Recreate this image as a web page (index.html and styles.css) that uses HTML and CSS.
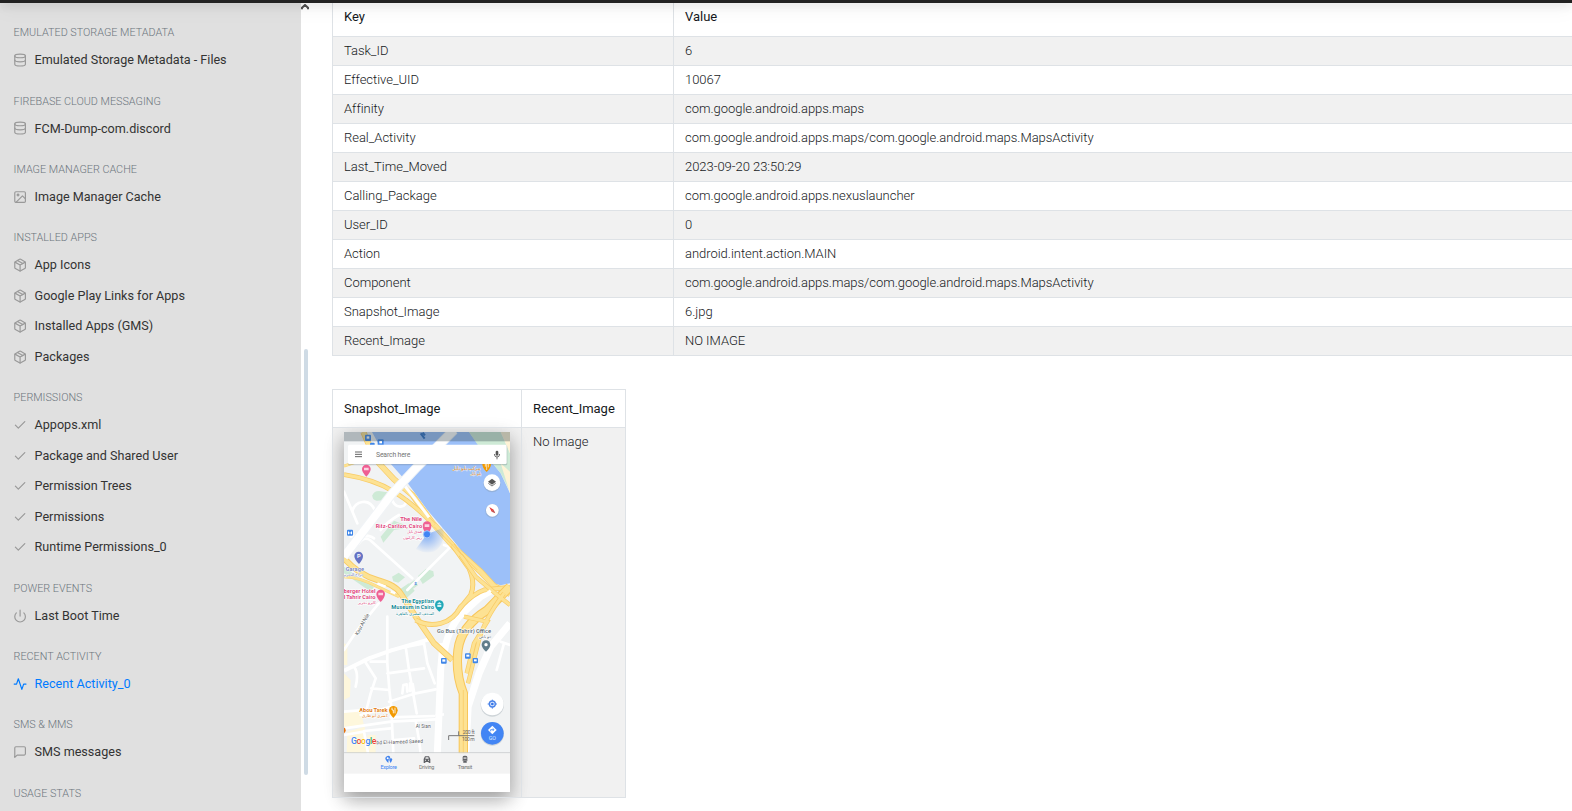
FILE: index.html
```html
<!DOCTYPE html>
<html lang="en">
<head>
<meta charset="utf-8">
<title>Recent Activity_0</title>
<link rel="stylesheet" href="styles.css">
</head>
<body>
<svg class="defs" width="0" height="0">
  <symbol id="database" viewBox="0 0 24 24"><ellipse cx="12" cy="5" rx="9" ry="3"/><path d="M21 12c0 1.66-4 3-9 3s-9-1.34-9-3"/><path d="M3 5v14c0 1.66 4 3 9 3s9-1.34 9-3V5"/></symbol>
  <symbol id="image" viewBox="0 0 24 24"><rect x="3" y="3" width="18" height="18" rx="2"/><circle cx="8.5" cy="8.5" r="1.5"/><path d="M21 15l-5-5L5 21"/></symbol>
  <symbol id="package" viewBox="0 0 24 24"><path d="M16.5 9.4l-9-5.19"/><path d="M21 16V8a2 2 0 0 0-1-1.73l-7-4a2 2 0 0 0-2 0l-7 4A2 2 0 0 0 3 8v8a2 2 0 0 0 1 1.73l7 4a2 2 0 0 0 2 0l7-4A2 2 0 0 0 21 16z"/><path d="M3.27 6.96L12 12.01l8.73-5.05M12 22.08V12"/></symbol>
  <symbol id="check" viewBox="0 0 24 24"><path d="M20 6L9 17l-5-5"/></symbol>
  <symbol id="power" viewBox="0 0 24 24"><path d="M18.36 6.64a9 9 0 1 1-12.73 0M12 2v10"/></symbol>
  <symbol id="activity" viewBox="0 0 24 24"><path d="M22 12h-4l-3 9L9 3l-3 9H2"/></symbol>
  <symbol id="message" viewBox="0 0 24 24"><path d="M21 15a2 2 0 0 1-2 2H7l-4 4V5a2 2 0 0 1 2-2h14a2 2 0 0 1 2 2z"/></symbol>
</svg>
<header class="topbar"></header>
<div class="page">
  <nav class="sidebar">
    <h6>Emulated Storage Metadata</h6>
    <a><svg><use href="#database"/></svg>Emulated Storage Metadata - Files</a>
    <h6>Firebase Cloud Messaging</h6>
    <a><svg><use href="#database"/></svg>FCM-Dump-com.discord</a>
    <h6>Image Manager Cache</h6>
    <a><svg><use href="#image"/></svg>Image Manager Cache</a>
    <h6>Installed Apps</h6>
    <a><svg><use href="#package"/></svg>App Icons</a>
    <a><svg><use href="#package"/></svg>Google Play Links for Apps</a>
    <a><svg><use href="#package"/></svg>Installed Apps (GMS)</a>
    <a><svg><use href="#package"/></svg>Packages</a>
    <h6>Permissions</h6>
    <a><svg><use href="#check"/></svg>Appops.xml</a>
    <a><svg><use href="#check"/></svg>Package and Shared User</a>
    <a><svg><use href="#check"/></svg>Permission Trees</a>
    <a><svg><use href="#check"/></svg>Permissions</a>
    <a><svg><use href="#check"/></svg>Runtime Permissions_0</a>
    <h6>Power Events</h6>
    <a><svg><use href="#power"/></svg>Last Boot Time</a>
    <h6>Recent Activity</h6>
    <a class="active"><svg><use href="#activity"/></svg>Recent Activity_0</a>
    <h6>SMS &amp; MMS</h6>
    <a><svg><use href="#message"/></svg>SMS messages</a>
    <h6>Usage Stats</h6>
  </nav>
  <div class="scroll">
    <svg class="up" viewBox="0 0 8 6"><path d="M1 5.2V3.8L4 1l3 2.800V5.200"/></svg>
    <div class="thumb"></div>
  </div>
  <main class="content">
    <table class="details">
      <thead><tr><th class="key">Key</th><th>Value</th></tr></thead>
      <tbody>
        <tr><td>Task_ID</td><td>6</td></tr>
        <tr><td>Effective_UID</td><td>10067</td></tr>
        <tr><td>Affinity</td><td>com.google.android.apps.maps</td></tr>
        <tr><td>Real_Activity</td><td>com.google.android.apps.maps/com.google.android.maps.MapsActivity</td></tr>
        <tr><td>Last_Time_Moved</td><td>2023-09-20 23:50:29</td></tr>
        <tr><td>Calling_Package</td><td>com.google.android.apps.nexuslauncher</td></tr>
        <tr><td>User_ID</td><td>0</td></tr>
        <tr><td>Action</td><td>android.intent.action.MAIN</td></tr>
        <tr><td>Component</td><td>com.google.android.apps.maps/com.google.android.maps.MapsActivity</td></tr>
        <tr><td>Snapshot_Image</td><td>6.jpg</td></tr>
        <tr><td>Recent_Image</td><td>NO IMAGE</td></tr>
      </tbody>
    </table>
    <table class="images">
      <thead><tr><th class="snap">Snapshot_Image</th><th>Recent_Image</th></tr></thead>
      <tbody><tr><td>
        <svg class="phone" viewBox="0 6 498 1080" font-family="Roboto, sans-serif">
          <defs><radialGradient id="beam" gradientUnits="userSpaceOnUse" cx="249" cy="313" r="58"><stop offset="0" stop-color="#4285f4" stop-opacity=".65"/><stop offset="1" stop-color="#4285f4" stop-opacity="0"/></radialGradient></defs>
          <rect y="6" width="498" height="1080" fill="#f1f3f4"/>
          <!-- river and parks -->
          <path d="M84 6L130 90 188 155 250 240 325 328 375 390 405 425 425 452 470 466 498 460V190L470 130 430 80 375 6z" fill="#9cc0f9"/>
          <path d="M375 6H470L498 70V185L470 130 405 50z" fill="#ceead6"/>
          <path d="M470 6H498V70zM470 100L498 125V190z" fill="#fef3d6"/>
          <g fill="#ceead6">
            <path d="M85 196Q90 183 105 183L130 187 124 210 98 212Q84 210 85 196z"/>
            <path d="M110 320L150 272 182 284 176 296 150 300 118 338z"/>
            <path d="M144 440L164 428 183 442 163 458 148 454zM168 478L194 460 212 482 188 504zM190 464L212 450 222 466 202 480zM222 438L246 416 268 424 270 438 236 462z"/>
            <path d="M0 410L50 445 90 470 80 485 0 430z"/>
          </g>
          <path d="M0 640L10 645V705H0zM0 730L20 750 18 800 0 810zM0 845H50L60 885 0 890zM10 905L62 890 70 970H8zM70 915H95V970H75z" fill="#fef7dc"/>
          <!-- local streets -->
          <g fill="none" stroke="#fff" stroke-width="8" stroke-linecap="round" stroke-linejoin="round">
            <path d="M0 185L40 280M25 245Q30 220 55 216T92 240M140 200Q150 232 170 230T185 205M45 340Q60 318 78 330L205 445M190 480L318 352L300 345M110 300Q130 275 165 255M104 520L40 600 0 660M20 320Q70 310 90 325"/>
            <path d="M130 560V700L136 780 142 830 148 970M60 690L95 745 80 790 62 860M140 660L240 640 250 700 272 760M30 710Q45 730 35 770M80 695H130M185 650L195 720 218 850M130 730L240 715M82 775L136 780M135 815L215 790 275 778M175 790L178 765 188 763 190 785M198 783V760L206 762 210 785M50 855L140 830M0 845L60 840M0 895L140 875 275 868M140 862L270 858M215 872L225 930 230 970M0 915L60 905 72 970M60 903L140 895M150 930L210 925M310 850L318 795Q325 785 333 795L330 855M278 855L340 850M470 635L498 645M480 640L458 720"/>
          </g>
          <path d="M0 722L75 685 140 662 265 625" fill="none" stroke="#fff" stroke-width="12"/>
          <path d="M498 580L440 650 405 730 372 830 365 970" fill="none" stroke="#fff" stroke-width="22"/>
          <path d="M300 970L340 970 348 830 328 740 300 700z" fill="#f1f3f4"/>
          <path d="M300 690Q300 620 345 560L410 500 445 480M297 640L290 720 285 850 280 970" fill="none" stroke="#fff" stroke-width="21"/>
          <!-- avenues -->
          <g fill="none">
            <path d="M58 6L72 38 105 100 150 148 205 195 265 278 335 357 410 425 450 468 498 492" stroke="#f8cb66" stroke-width="18"/>
            <path d="M58 6L72 38 105 100 150 148 205 195 265 278 335 357 410 425 450 468 498 492" stroke="#fde293" stroke-width="14"/>
            <path d="M0 134Q90 148 150 185T270 285" stroke="#f8cb66" stroke-width="14"/>
            <path d="M0 134Q90 148 150 185T270 285" stroke="#fde293" stroke-width="10"/>
            <path d="M0 385Q45 435 100 450T170 490L215 560 270 640 325 690" stroke="#f8cb66" stroke-width="18"/>
            <path d="M0 385Q45 435 100 450T170 490L215 560 270 640 325 690" stroke="#fde293" stroke-width="13"/>
            <path d="M0 440Q50 442 100 470L165 500M0 108L60 88" stroke="#fbd575" stroke-width="9"/>
            <path d="M0 440Q50 442 100 470L165 500M0 108L60 88" stroke="#fde293" stroke-width="6"/>
            <path d="M215 570Q250 590 290 580T350 530Q390 490 420 480L498 472M325 345L375 415Q395 460 380 495L340 545" stroke="#f8cb66" stroke-width="15"/>
            <path d="M215 570Q250 590 290 580T350 530Q390 490 420 480L498 472M325 345L375 415Q395 460 380 495L340 545" stroke="#fde293" stroke-width="10"/>
            <path d="M498 470L430 540Q350 590 342 660T358 790V970" stroke="#f8c65a" stroke-width="28"/>
            <path d="M498 470L430 540Q350 590 342 660T358 790V970" stroke="#fde293" stroke-width="22"/>
            <path d="M480 490Q420 570 405 630T372 760M498 525L460 495 395 440 350 375M360 560L430 575 390 640 368 730" stroke="#f8cb66" stroke-width="13"/>
            <path d="M480 490Q420 570 405 630T372 760M498 525L460 495 395 440 350 375M360 560L430 575 390 640 368 730" stroke="#fde293" stroke-width="9"/>
            <path d="M358 780V970M270 290L400 420" stroke="#f9c95f" stroke-width="2"/>
            <path d="M178 162L212 205 255 262M310 620Q335 570 375 530L440 482" stroke="#fff" stroke-width="9"/>
            <path d="M100 460L125 470M140 484L154 490" stroke="#fff" stroke-width="7"/>
          </g>
          <path d="M330 0L222 108 145 190 0 380" fill="none" stroke="#f1f4f7" stroke-width="29"/>
          <path d="M330 0L222 108 145 190 0 380" fill="none" stroke="#fff" stroke-width="23"/>
          <!-- current location -->
          <path d="M249 313L298 293Q305 345 270 365 240 372 215 358z" fill="url(#beam)"/>
          <g fill="#3f86e8"><rect x="63" y="14" width="18" height="19" rx="3"/><rect x="101" y="28" width="18" height="19" rx="3"/><rect x="78" y="38" width="14" height="12" rx="3"/><rect x="9" y="299" width="18" height="18" rx="3"/><rect x="291" y="684" width="17" height="17" rx="3"/><rect x="363" y="670" width="17" height="16" rx="3"/><rect x="386" y="684" width="16" height="16" rx="3"/></g>
          <g fill="#fff"><rect x="68" y="19" width="8" height="7"/><rect x="106" y="33" width="8" height="7"/><path d="M12 313V303L18 309 24 303V313H21V308L18 312 15 308V313z"/><rect x="295" y="688" width="9" height="7"/><rect x="367" y="674" width="9" height="6"/><rect x="390" y="688" width="8" height="6"/></g>
          <path d="M230 10L242 26M236 8L243 16" stroke="#2f6fc4" stroke-width="6"/>
          <!-- status and search bars -->
          <rect y="6" width="498" height="28" fill="#37474f" opacity=".35"/>
          <rect x="12" y="46" width="478" height="60" rx="4" fill="#6b7a88" opacity=".3"/>
          <rect x="12" y="44" width="476" height="58" rx="4" fill="#fff"/>
          <path d="M33 66H54M33 73H54M33 80H54" stroke="#666" stroke-width="3"/>
          <text x="96" y="81" font-size="20.500" font-weight="400" fill="#757575" textLength="103">Search here</text>
          <rect x="455" y="62" width="8" height="15" rx="4" fill="#555"/><path d="M451 72Q451 81 459 81T467 72M459 81V88" fill="none" stroke="#555" stroke-width="2.500"/>
          <!-- places -->
          <g fill="#ef5f93">
            <path d="M67 140Q54 127 54 117A13 13 0 0 1 80 117Q80 127 67 140z"/>
            <path d="M249 314Q236 300 236 287A13 13 0 0 1 262 287Q262 300 249 314z"/>
            <path d="M110 516Q97 503 97 492A13 13 0 0 1 123 492Q123 503 110 516z"/>
          </g>
          <circle cx="249" cy="313" r="11" fill="#4285f4" stroke="#a9c8fa" stroke-width="3"/>
          <path d="M60 113H74V121H60zM242 283H256V291H242zM103 488H117V496H103z" fill="#fbd3e1"/>
          <g font-weight="700" font-size="17.500" fill="#e0457d" stroke="#fff" stroke-width="3" paint-order="stroke" text-anchor="end">
            <text x="234" y="274">The Nile</text><text x="235" y="295" textLength="140">Ritz-Carlton, Cairo</text>
            <text x="95" y="488" textLength="96">berger Hotel</text><text x="95" y="507" textLength="96">l Tahrir Cairo</text>
            <g font-weight="400" font-size="13"><text x="234" y="310">فندق نايل</text><text x="234" y="326">ريتز كارلتون</text><text x="95" y="523">كايرو تحرير</text></g>
          </g>
          <path d="M428 126Q415 114 415 102H441Q441 114 428 126z" fill="#f29900"/><path d="M424 102V110M428 102V120M433 102V112" stroke="#fff" stroke-width="2"/>
          <g font-size="15" font-weight="400" fill="#d9862b" stroke="#e8eef5" stroke-width="2" paint-order="stroke" text-anchor="end"><text x="412" y="119">مركب بلو نايل</text><text x="412" y="135" font-size="13">بلو نايل</text></g>
          <path d="M45 402Q31 388 31 378A13 13 0 0 1 57 378Q57 388 45 402z" fill="#6673c4"/><text x="39" y="385" font-size="17" font-weight="700" fill="#fff">P</text>
          <g fill="#6b77bd" font-weight="500" stroke="#fff" stroke-width="2" paint-order="stroke"><text x="5" y="423" font-size="17" textLength="55">Garage</text><text x="58" y="439" font-size="13" text-anchor="end">جراج التحرير</text></g>
          <text x="211" y="465" font-size="13" fill="#4c83e0" font-weight="700">$</text>
          <path d="M286 545Q273 534 273 524A13 13 0 0 1 299 524Q299 534 286 545z" fill="#20a8b8"/><path d="M279 522L286 516 293 522zM280 524H292V531H280z" fill="#d5f3f5"/>
          <g font-weight="700" font-size="17.500" fill="#148a96" stroke="#fff" stroke-width="3" paint-order="stroke" text-anchor="end"><text x="270" y="518" textLength="98">The Egyptian</text><text x="270" y="538" textLength="128">Museum in Cairo</text><text x="270" y="555" font-size="11.500" font-weight="400">المتحف المصري بالقاهرة</text></g>
          <g font-size="17.500" fill="#56666f" font-weight="500" stroke="#fff" stroke-width="3" paint-order="stroke" text-anchor="end"><text x="441" y="608" textLength="162">Go Bus (Tahrir) Office</text><text x="441" y="625" font-size="13">جو باص</text></g>
          <path d="M426 665Q413 653 413 644A13 13 0 0 1 439 644Q439 653 426 665z" fill="#607d8b"/><circle cx="426" cy="644" r="5" fill="#fff"/>
          <text x="42" y="617" font-size="16" font-weight="400" fill="#5b5f63" stroke="#fff" stroke-width="3" paint-order="stroke" transform="rotate(-61 42 617)" textLength="72">Kasr Al Nile</text>
          <path d="M148 864Q135 850 135 841A13 13 0 0 1 161 841Q161 850 148 864z" fill="#f29900"/><path d="M144 833V840H148V850M153 833V850" stroke="#fff" stroke-width="2.500" fill="none"/>
          <g fill="#e37b12" stroke="#fff" stroke-width="3" paint-order="stroke" text-anchor="end"><text x="131" y="845" font-size="17.500" font-weight="700" textLength="85">Abou Tarek</text><text x="131" y="861" font-size="12">كشري أبو طارق</text></g>
          <circle cx="-4" cy="901" r="9" fill="#e8710a"/>
          <g font-size="15" font-weight="400" fill="#55595d" stroke="#fff" stroke-width="2" paint-order="stroke"><text x="215" y="895" textLength="45">Al Sian</text><text x="97" y="943" textLength="140" transform="rotate(-2 97 943)">bd El-Hameed Saeed</text></g>
          <text x="21" y="942" font-size="26" font-weight="500" textLength="76" stroke="#fff" stroke-width="2" paint-order="stroke"><tspan fill="#4285f4">G</tspan><tspan fill="#ea4335">o</tspan><tspan fill="#fbbc05">o</tspan><tspan fill="#4285f4">g</tspan><tspan fill="#34a853">l</tspan><tspan fill="#ea4335">e</tspan></text>
          <g font-size="15" font-weight="400" fill="#666"><text x="356" y="911" textLength="36">200 ft</text><text x="354" y="933" textLength="38">100 m</text></g><path d="M314 930V917H391M344 917V904" fill="none" stroke="#777" stroke-width="3"/>
          <!-- map buttons -->
          <g fill="#809099" opacity=".3"><circle cx="444" cy="161" r="26"/><circle cx="445" cy="243" r="21"/><circle cx="445" cy="825" r="35"/><circle cx="445" cy="912" r="35"/></g>
          <circle cx="444" cy="158" r="25" fill="#fff"/><path d="M444 146L456 155 444 164 432 155z" fill="#555"/><path d="M433 160L444 168 455 160" fill="none" stroke="#777" stroke-width="3"/>
          <circle cx="445" cy="241" r="19" fill="#fff"/><path d="M436 231L449 239 443 245z" fill="#e53935"/><path d="M443 245L449 239 454 250z" fill="#bd4b4b"/>
          <circle cx="445" cy="822" r="34" fill="#fff"/><circle cx="445" cy="822" r="9" fill="#dce8fd" stroke="#4a83e8" stroke-width="4"/><circle cx="445" cy="822" r="4" fill="#3474e8"/><path d="M445 809V813M445 831V836M431 822H436M454 822H459" stroke="#4a83e8" stroke-width="3"/>
          <circle cx="445" cy="910" r="34" fill="#4285f4"/><path d="M445 887L458 900 445 913 432 900z" fill="#fff"/><path d="M440 904V899H449M446 895L450 899 446 903" fill="none" stroke="#4285f4" stroke-width="2.500"/><text x="434" y="931" font-size="16" font-weight="400" fill="#dbe8ff">GO</text>
          <!-- bottom navigation -->
          <rect y="967" width="498" height="3" fill="#c7c9cb"/><rect y="970" width="498" height="61" fill="#f3f3f3"/><rect y="1031" width="498" height="55" fill="#fff"/>
          <path d="M133 999Q123 989 124 984A8 8 0 0 1 139 982L134 989zM140 999Q135 991 136 987A5 5 0 0 1 145 988Q144 993 140 999z" fill="#3f82ee"/><circle cx="131" cy="985" r="3" fill="#fff"/>
          <path d="M239 987L243 979H255L259 987V999H254V996H244V999H239z" fill="#606266"/><path d="M244 986L245 982H253L254 986zM243 989H246V992H243zM252 989H255V992H252z" fill="#eee"/>
          <path d="M356 981Q356 977 363 977T370 981V993L367 995 369 998H357L359 995 356 993z" fill="#606266"/><path d="M359 982H362V987H359zM364 982H367V987H364zM359 990H361V992H359zM365 990H367V992H365z" fill="#eee"/>
          <g font-size="16.500" font-weight="400" text-anchor="middle" fill="#757575"><text x="134" y="1018" fill="#4285f4" textLength="49">Explore</text><text x="248" y="1018" textLength="46">Driving</text><text x="363" y="1018" textLength="44">Transit</text></g>
        </svg>
      </td><td>No Image</td></tr></tbody>
    </table>
  </main>
</div>
</body>
</html>
```
FILE: styles.css
```css
* { box-sizing: border-box; }
body {
  margin: 0;
  height: 811px;
  overflow: hidden;
  background: #fff;
  color: #16191c;
  font: 300 13px/20px Roboto, "Noto Sans", sans-serif;
}
.defs { position: absolute; }
.topbar {
  position: relative;
  z-index: 2;
  height: 3px;
  background: #212121;
  box-shadow: 0 2px 8px rgba(0, 0, 0, .18), 0 2px 20px rgba(0, 0, 0, .18);
}
.page { display: flex; height: 808px; }
.sidebar {
  flex: 0 0 301px;
  height: 808px;
  padding: 10.400px 13.600px 0;
  overflow: hidden;
  background: #e0e0e0;
}
.sidebar h6 {
  height: 31.500px;
  margin: 0 0 6.400px;
  padding-top: 9.800px;
  color: #6c757d;
  font-size: 10.800px;
  font-weight: 300;
  line-height: 20px;
  text-transform: uppercase;
  white-space: nowrap;
}
.sidebar h6 { margin-bottom: 0; }
.sidebar h6:not(:first-child) { margin-top: 6.400px; }
.sidebar a {
  display: flex;
  align-items: center;
  height: 30.500px;
  gap: 7.400px;
  color: #333;
  font-size: 12.600px;
  font-weight: 400;
  white-space: nowrap;
}
.sidebar svg {
  width: 14.200px;
  height: 14.200px;
  margin-left: -.6px;
  fill: none;
  stroke: #999;
  stroke-width: 2;
  stroke-linecap: round;
  stroke-linejoin: round;
}
.sidebar .active { color: #007bff; }
.sidebar .active svg { stroke: #007bff; }
.scroll { flex: 0 0 31px; }
.up {
  display: block;
  width: 8px;
  height: 6px;
  margin: 1px 0 0;
  fill: none;
  stroke: #505050;
  stroke-width: 2;
}
.thumb {
  width: 4px;
  height: 426px;
  margin: 339px 0 0 3px;
  border-radius: 2px;
  background: #cfdbe5;
}
.content { flex: 1 0 0; min-width: 0; margin-top: -5px; }
table { border-collapse: collapse; table-layout: fixed; }
th, td {
  padding: 0 11px;
  border: 1px solid #dee2e6;
  text-align: left;
  letter-spacing: -.03px;
  white-space: nowrap;
}
th { height: 38px; font-weight: 400; }
td { height: 29px; }
tbody tr:nth-child(odd) { background: #f1f1f1; }
.details { width: 1300px; }
.details th { padding-bottom: 2px; }
.key { width: 341px; }
.images { width: 294px; margin-top: 33px; }
.snap { width: 189px; }
.images td { height: 370px; padding-top: 4px; vertical-align: top; }
.phone {
  display: block;
  width: 166px;
  height: 360px;
  letter-spacing: 0;
  box-shadow: 0 8px 17px rgba(0, 0, 0, .2), 0 6px 20px rgba(0, 0, 0, .19);
}
```
